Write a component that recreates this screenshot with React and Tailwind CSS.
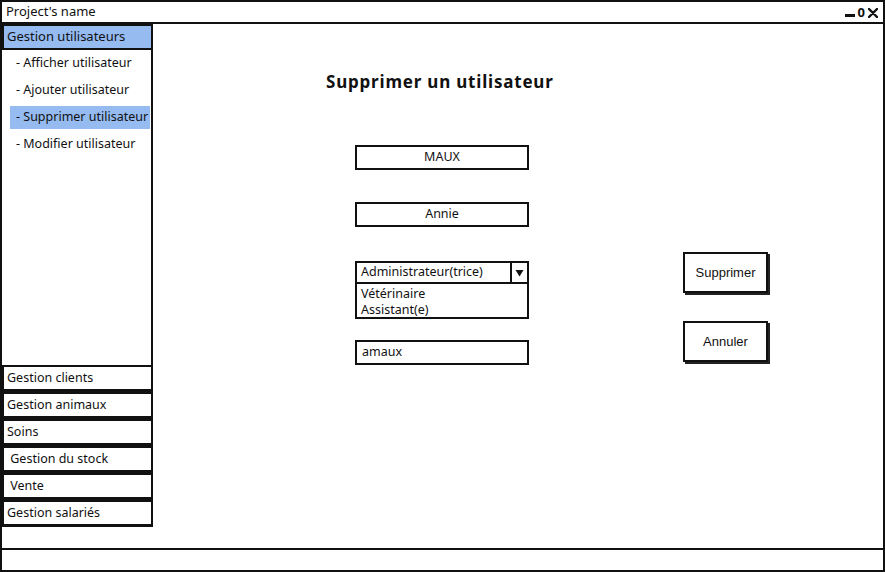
import React from 'react';

const sketch = { fontFamily: '"Noto Sans", "DejaVu Sans", sans-serif' };
const arial = { fontFamily: '"Liberation Sans", Arial, sans-serif' };

const subItems = [
  { label: '- Afficher utilisateur' },
  { label: '- Ajouter utilisateur' },
  { label: '- Supprimer utilisateur', active: true },
  { label: '- Modifier utilisateur' },
];

const menus = ['Gestion clients', 'Gestion animaux', 'Soins', ' Gestion du stock', ' Vente', 'Gestion salariés'];

const Field = ({ children }) => (
  <div className="w-[174px] h-[25px] border-2 border-[#111] flex items-center justify-center text-[12.5px] text-[#111] bg-white">
    {children}
  </div>
);

const Button = ({ children, className = '' }) => (
  <div className={`w-[85px] h-[41px] border-2 border-[#111] bg-white flex items-center justify-center text-[13px] text-[#111] shadow-[2px_2px_0_#222] ${className}`} style={arial}>
    {children}
  </div>
);

const App = () => {
  return (
    <div className="w-[885px] h-[572px] bg-white flex flex-col border-2 border-[#111] text-[#111]" style={sketch}>
      <header className="h-[22px] border-b-2 border-[#111] flex items-center justify-between pl-1 pr-[5px]">
        <span className="text-[13px]">Project's name</span>
        <div className="flex items-center gap-[3px] mt-[1px]">
          <span className="block w-[10px] h-[3px] bg-[#111] mt-[6px]"></span>
          <span className="text-[13px] font-bold leading-none">0</span>
          <svg width="10" height="10" viewBox="0 0 10 10">
            <path d="M1 1 L9 9 M9 1 L1 9" stroke="#111" strokeWidth="2.4" strokeLinecap="round" />
          </svg>
        </div>
      </header>

      <div className="flex flex-1">
        <aside className="w-[151px] flex flex-col">
          <div className="h-[26px] bg-[#95bbf1] border-2 border-[#111] flex items-center pl-[3px] text-[13px]">
            Gestion utilisateurs
          </div>
          <div className="flex-1 border-r-2 border-[#111] pt-[2px] pr-[1px] pl-[8px] flex flex-col">
            {subItems.map((it) => (
              <div
                key={it.label}
                className={`h-[23px] mb-[4px] flex items-center pl-[6px] text-[12.5px] ${it.active ? 'bg-[#95bbf1]' : ''}`}
              >
                {it.label}
              </div>
            ))}
          </div>
          {menus.map((m) => (
            <div
              key={m}
              className="h-[27px] shrink-0 border-2 border-[#111] border-b-[3px] bg-white flex items-center pl-[3px] text-[12.5px] whitespace-pre"
            >
              {m}
            </div>
          ))}
          <div className="h-[21px] shrink-0"></div>
        </aside>

        <main className="flex-1">
          <h1 className="ml-[173px] mt-[45px] text-[17px] font-bold tracking-[0.8px] leading-[26px]">
            Supprimer un utilisateur
          </h1>
          <div className="flex mt-[50px] ml-[202px]">
            <div className="flex flex-col">
              <Field>MAUX</Field>
              <div className="mt-[32px]">
                <Field>Annie</Field>
              </div>
              <div className="mt-[34px] w-[174px]">
                <div className="h-[23px] border-2 border-[#111] flex items-stretch text-[12.5px]">
                  <span className="flex-1 flex items-center pl-[4px]">Administrateur(trice)</span>
                  <span className="w-[17px] border-l-2 border-[#111] flex items-center justify-center">
                    <svg width="9" height="8" viewBox="0 0 9 8">
                      <path d="M0.5 1 L8.5 1 L4.5 7.5 Z" fill="#111" />
                    </svg>
                  </span>
                </div>
                <div className="h-[35px] border-2 border-t-0 border-[#111] pl-[4px] pt-[2px] text-[12.5px] leading-[16px]">
                  <div>Vétérinaire</div>
                  <div>Assistant(e)</div>
                </div>
              </div>
              <div className="mt-[21px]">
                <div className="w-[174px] h-[25px] border-2 border-[#111] flex items-center pl-[5px] text-[12.5px]">
                  amaux
                </div>
              </div>
            </div>
            <div className="flex flex-col ml-[154px] mt-[107px]">
              <Button>Supprimer</Button>
              <Button className="mt-[28px]">Annuler</Button>
            </div>
          </div>
        </main>
      </div>

      <footer className="h-[22px] border-t-2 border-[#111]"></footer>
    </div>
  );
};

export default App;
